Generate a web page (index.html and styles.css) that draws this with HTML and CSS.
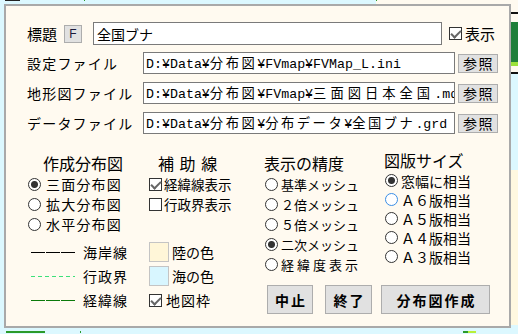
FILE: index.html
```html
<!DOCTYPE html>
<html lang="ja">
<head>
  <meta charset="UTF-8" />
  <title>分布図作成</title>
  <link rel="stylesheet" href="styles.css">
</head>
<body>
  <div class="map-north"></div>
  <div class="map-east"></div>
  <div class="map-south"></div>

  <div class="dialog">
    <div class="title-row">
      <span class="label">標題</span>
      <button class="fbtn">F</button>
      <input class="title-input" type="text" value="全国ブナ">
      <label class="show"><input class="box" type="checkbox" checked><span>表示</span></label>
    </div>

    <div class="files">
      <span class="label">設定ファイル</span>
      <div class="field">D:¥Data¥<span class="jp">分布図</span>¥FVmap¥FVMap_L.ini</div>
      <button class="ref">参照</button>

      <span class="label">地形図ファイル</span>
      <div class="field">D:¥Data¥<span class="jp">分布図</span>¥FVmap¥<span class="jp wide-jp">三面図日本全国</span>.mdb</div>
      <button class="ref">参照</button>

      <span class="label">データファイル</span>
      <div class="field">D:¥Data¥<span class="jp">分布図</span>¥<span class="jp">分布データ</span>¥<span class="jp">全国ブナ</span>.grd</div>
      <button class="ref">参照</button>
    </div>

    <div class="lower">
      <div class="left">
        <div class="groups">
          <div class="group g1">
            <div class="heading">作成分布図</div>
            <label class="opt"><input class="dot" type="radio" name="kind" checked>三面分布図</label>
            <label class="opt"><input class="dot" type="radio" name="kind">拡大分布図</label>
            <label class="opt"><input class="dot" type="radio" name="kind">水平分布図</label>
          </div>
          <div class="group g2">
            <div class="heading">補 助 線</div>
            <label class="opt"><input class="box" type="checkbox" checked>経緯線表示</label>
            <label class="opt"><input class="box" type="checkbox">行政界表示</label>
          </div>
        </div>

        <div class="legend">
          <span class="line coast"></span>
          <span class="lg-label">海岸線</span>
          <span class="swatch land"></span>
          <span>陸の色</span>

          <span class="line admin"></span>
          <span class="lg-label">行政界</span>
          <span class="swatch sea"></span>
          <span>海の色</span>

          <span class="line grid"></span>
          <span class="lg-label">経緯線</span>
          <label class="frame"><input class="box" type="checkbox" checked><span>地図枠</span></label>
        </div>
      </div>

      <div class="right">
        <div class="groups">
          <div class="group g3">
            <div class="heading">表示の精度</div>
            <label class="opt"><input class="dot" type="radio" name="mesh">基準メッシュ</label>
            <label class="opt"><input class="dot" type="radio" name="mesh">２倍メッシュ</label>
            <label class="opt"><input class="dot" type="radio" name="mesh">５倍メッシュ</label>
            <label class="opt"><input class="dot" type="radio" name="mesh" checked>二次メッシュ</label>
            <label class="opt wide"><input class="dot" type="radio" name="mesh">経緯度表示</label>
          </div>
          <div class="group g4">
            <div class="heading">図版サイズ</div>
            <label class="opt"><input class="dot" type="radio" name="size" checked>窓幅に相当</label>
            <label class="opt"><input class="dot focus" type="radio" name="size">Ａ６版相当</label>
            <label class="opt"><input class="dot" type="radio" name="size">Ａ５版相当</label>
            <label class="opt"><input class="dot" type="radio" name="size">Ａ４版相当</label>
            <label class="opt"><input class="dot" type="radio" name="size">Ａ３版相当</label>
          </div>
        </div>

        <div class="actions">
          <button class="act stop">中止</button>
          <button class="act quit">終了</button>
          <button class="act make">分布図作成</button>
        </div>
      </div>
    </div>
  </div>
</body>
</html>
```

FILE: styles.css
```css
* {
  box-sizing: border-box;
}

body {
  margin: 0;
  width: 518px;
  height: 334px;
  overflow: hidden;
  position: relative;
  background: #dcf8ff;
  font-family: "Noto Sans CJK JP", sans-serif;
  color: #000;
}

/* bits of the map that peek out around the dialog */
.map-north {
  position: absolute;
  left: 0;
  top: 0;
  width: 518px;
  height: 4px;
  background:
    linear-gradient(90deg, transparent 5px, #222 5px 20px, transparent 20px 84px, #2a9a2a 84px 85px, transparent 85px 376px, #2a9a2a 376px 377px, transparent 377px),
    linear-gradient(90deg, transparent 376px, #fffaf0 376px);
  background-size: 100% 1px, 100% 100%;
  background-repeat: no-repeat;
}

.map-east {
  position: absolute;
  left: 511px;
  top: 0;
  width: 7px;
  height: 334px;
  background: linear-gradient(180deg, #fffaf0 0 12px, #111 12px 14px, #fffaf0 14px 22px, #1f7f3a 22px 62px, #9be23a 62px 66px, #fffaf0 66px 72px, #111 72px 74px, #dcf8ff 74px 170px, #fff8e0 170px 325px, #dcf8ff 325px);
}

.map-south {
  position: absolute;
  left: 0;
  top: 331px;
  width: 518px;
  height: 2px;
  background: linear-gradient(90deg, transparent 6px, #2a9a2a 6px 45px, transparent 45px 80px, #2a9a2a 80px 81px, transparent 81px 463px, #2a9a2a 463px 468px, #b8ef3a 468px 476px, transparent 476px);
}

.dialog {
  position: relative;
  margin: 4px 0 0 4px;
  width: 507px;
  height: 324px;
  border: 2px solid #a9a9a9;
  background: #fffaf0;
  padding: 16px 0 0 21px;
}

/* title row */
.title-row {
  display: flex;
  align-items: center;
  height: 23px;
}

.label {
  font-size: 15px;
  line-height: 20px;
  white-space: nowrap;
}

.fbtn {
  width: 18px;
  height: 18px;
  margin-left: 7px;
  padding: 0;
  border: 1px solid #adadad;
  background: #e1e1e1;
  color: #1a1a3a;
  font: 12px "Liberation Sans", sans-serif;
}

.title-input {
  margin-left: 11px;
  width: 349px;
  height: 23px;
  padding: 0 3px;
  border: 1px solid #7a7a7a;
  background: #fff;
  font: 14px "Noto Sans CJK JP", sans-serif;
  color: #000;
  outline: none;
}

.show {
  display: flex;
  align-items: center;
  gap: 3px;
  margin-left: 7px;
  font-size: 15px;
  line-height: 20px;
}

/* file rows */
.files {
  display: grid;
  grid-template-columns: 116px 312px 43px;
  grid-auto-rows: 22px;
  row-gap: 8px;
  align-items: center;
  margin-top: 7px;
}

.files .label {
  font-size: 14px;
  letter-spacing: 1.2px;
}

.field {
  height: 22px;
  padding: 0 2px;
  border: 1px solid #7a7a7a;
  background: #fff;
  white-space: nowrap;
  overflow: hidden;
  font: 13.3px/20px "Liberation Mono", "Noto Sans CJK JP", monospace;
}

.field .jp {
  font-family: "Noto Sans CJK JP", sans-serif;
  letter-spacing: 2.5px;
}

.field .wide-jp {
  letter-spacing: 4px;
}

.ref {
  justify-self: end;
  width: 40px;
  height: 19px;
  padding: 0 0 0 1px;
  border: 1px solid #adadad;
  background: #e1e1e1;
  font: 14px/17px "Noto Sans CJK JP", sans-serif;
  letter-spacing: 1.5px;
  color: #000;
}

/* lower part */
.lower {
  display: flex;
  margin-top: 19px;
}

.left {
  width: 237px;
}

.groups {
  display: flex;
}

.g1 { width: 121px; }
.g2 { width: 116px; }
.g3 { width: 120px; }
.g4 { width: 110px; margin-top: -3px; }

.heading {
  font-size: 16px;
  line-height: 20px;
  margin-bottom: 1px;
  white-space: pre;
}

.g1 .heading { padding-left: 16px; }
.g2 .heading { padding-left: 10px; letter-spacing: 1px; }

.opt {
  display: flex;
  align-items: center;
  gap: 3px;
  height: 20px;
  padding-left: 1px;
  font-size: 14px;
  white-space: nowrap;
}

.g1 .opt {
  gap: 5px;
  letter-spacing: 1.2px;
}

.g2 .opt {
  gap: 2px;
  font-size: 13.5px;
}

.g3 .opt {
  font-size: 13px;
}

.g3 .wide {
  letter-spacing: 3px;
}

.g4 .opt {
  height: 19px;
}

/* hand-drawn checks and radios */
.box {
  appearance: none;
  position: relative;
  flex: none;
  margin: 0;
  width: 13px;
  height: 13px;
  border: 1px solid #333;
  background: #fff;
}

.box:checked::after {
  content: "";
  position: absolute;
  left: 3px;
  top: 0;
  width: 4px;
  height: 8px;
  border: solid #666;
  border-width: 0 2px 2px 0;
  transform: rotate(45deg);
}

.dot {
  appearance: none;
  flex: none;
  margin: 0;
  width: 13px;
  height: 13px;
  border: 1px solid #333;
  border-radius: 50%;
  background: #fff;
}

.dot:checked {
  background: radial-gradient(circle, #333 0 3px, #888 3.5px, #fff 4px);
}

.dot.focus {
  border-color: #3a8ee6;
}

/* legend */
.legend {
  display: grid;
  grid-template-columns: 56px 66px 23px auto;
  grid-auto-rows: 20px;
  row-gap: 4px;
  align-items: center;
  margin-top: 8px;
  font-size: 14px;
}

.line {
  margin-left: 4px;
  width: 44px;
  height: 1px;
}

.coast {
  background: repeating-linear-gradient(90deg, #000 0 14px, transparent 14px 15px);
}

.admin {
  background: repeating-linear-gradient(90deg, #3de07a 0 4px, transparent 4px 7px);
}

.grid {
  background: repeating-linear-gradient(90deg, #0a7a0a 0 14px, transparent 14px 15px);
}

.lg-label {
  letter-spacing: 1px;
}

.swatch {
  width: 20px;
  height: 20px;
  border: 1px solid #c4c4c4;
}

.land { background: #fff6d8; }
.sea { background: #d8f6ff; }

.frame {
  grid-column: 3 / span 2;
  display: flex;
  align-items: center;
  gap: 4px;
  letter-spacing: 1px;
}

/* action buttons */
.actions {
  display: flex;
  margin-top: 11px;
  padding-left: 3px;
}

.act {
  height: 29px;
  padding: 0 0 0 2px;
  border: 1px solid #adadad;
  background: #e1e1e1;
  font: bold 14px "Noto Sans CJK JP", sans-serif;
  letter-spacing: 2px;
  color: #000;
}

.stop { width: 46px; }
.quit { width: 47px; margin-left: 12px; }
.make { width: 109px; margin-left: 9px; }
```
